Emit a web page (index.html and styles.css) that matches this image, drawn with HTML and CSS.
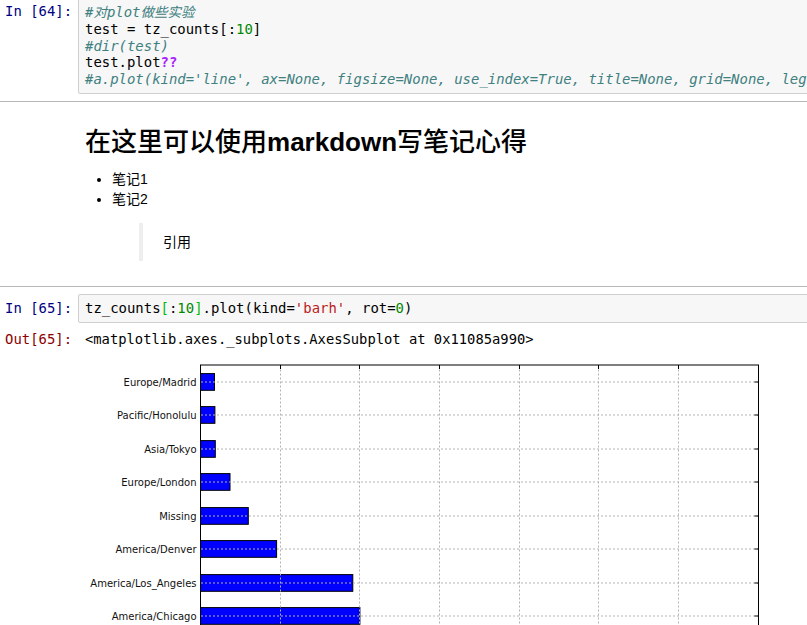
FILE: index.html
```html
<!DOCTYPE html>
<html>
<head>
<meta charset="utf-8">
<link rel="stylesheet" href="styles.css">
</head>
<body>
<div class="nb">
  <div class="cell code-cell">
    <div class="prompt in-prompt">In&nbsp;[64]:</div>
    <div class="input"><pre class="code"><span class="c">#<span class="cjk">对</span>plot<span class="cjk">做些实验</span></span>
test = tz_counts[:<span class="n">10</span>]
<span class="c">#dir(test)</span>
test.plot<span class="op">??</span>
<span class="c">#a.plot(kind='line', ax=None, figsize=None, use_index=True, title=None, grid=None, legend=True, style=None)</span></pre></div>
  </div>

  <div class="cell md-cell">
    <div class="rendered">
      <h1 class="md-title"><span class="cjkh">在这里可以使用</span>markdown<span class="cjkh">写笔记心得</span></h1>
      <ul class="md-list">
        <li>笔记1</li>
        <li>笔记2</li>
      </ul>
      <blockquote class="md-quote">引用</blockquote>
    </div>
  </div>

  <div class="cell code-cell second">
    <div class="prompt in-prompt">In&nbsp;[65]:</div>
    <div class="input"><pre class="code">tz_counts<span class="mb">[</span>:<span class="n">10</span><span class="mb">]</span>.plot(kind=<span class="s">'barh'</span>, rot=<span class="n">0</span>)</pre></div>
  </div>

  <div class="out-row">
    <div class="prompt out-prompt">Out[65]:</div>
    <div class="output">
      <pre class="out-text">&lt;matplotlib.axes._subplots.AxesSubplot at 0x11085a990&gt;</pre>
      <svg class="chart" width="722" height="360" viewBox="0 0 722 360" xmlns="http://www.w3.org/2000/svg">
        <g transform="translate(-85,-354.5)">
          <rect x="200.5" y="364.5" width="558" height="334.5" fill="#fff"/>
          <g fill="#0000ff" stroke="#000" stroke-width="1">
            <rect x="200.5" y="373.1" width="14" height="16.7"/>
            <rect x="200.5" y="406.1" width="14.4" height="16.7"/>
            <rect x="200.5" y="440.1" width="14.8" height="16.7"/>
            <rect x="200.5" y="473.1" width="29.5" height="16.7"/>
            <rect x="200.5" y="507.1" width="47.8" height="16.7"/>
            <rect x="200.5" y="540.1" width="76.1" height="16.7"/>
            <rect x="200.5" y="574.1" width="152.3" height="16.7"/>
            <rect x="200.5" y="607.1" width="159.4" height="16.7"/>
            <rect x="200.5" y="640.1" width="207.7" height="16.7"/>
            <rect x="200.5" y="674.1" width="498.6" height="16.7"/>
          </g>
          <g stroke="#b3b3b3" stroke-width="1" stroke-dasharray="2,2">
            <line x1="280.5" y1="365" x2="280.5" y2="699"/>
            <line x1="359.5" y1="365" x2="359.5" y2="699"/>
            <line x1="439.5" y1="365" x2="439.5" y2="699"/>
            <line x1="519.5" y1="365" x2="519.5" y2="699"/>
            <line x1="598.5" y1="365" x2="598.5" y2="699"/>
            <line x1="678.5" y1="365" x2="678.5" y2="699"/>
            <line x1="201" y1="381.5" x2="758" y2="381.5"/>
            <line x1="201" y1="414.5" x2="758" y2="414.5"/>
            <line x1="201" y1="448.5" x2="758" y2="448.5"/>
            <line x1="201" y1="481.5" x2="758" y2="481.5"/>
            <line x1="201" y1="515.5" x2="758" y2="515.5"/>
            <line x1="201" y1="548.5" x2="758" y2="548.5"/>
            <line x1="201" y1="582.5" x2="758" y2="582.5"/>
            <line x1="201" y1="615.5" x2="758" y2="615.5"/>
            <line x1="201" y1="648.5" x2="758" y2="648.5"/>
            <line x1="201" y1="682.5" x2="758" y2="682.5"/>
          </g>
          <g stroke="#000" stroke-width="1">
            <line x1="280.5" y1="364.5" x2="280.5" y2="368.5"/>
            <line x1="359.5" y1="364.5" x2="359.5" y2="368.5"/>
            <line x1="439.5" y1="364.5" x2="439.5" y2="368.5"/>
            <line x1="519.5" y1="364.5" x2="519.5" y2="368.5"/>
            <line x1="598.5" y1="364.5" x2="598.5" y2="368.5"/>
            <line x1="678.5" y1="364.5" x2="678.5" y2="368.5"/>
            <line x1="754.5" y1="381.5" x2="758.5" y2="381.5"/>
            <line x1="754.5" y1="414.5" x2="758.5" y2="414.5"/>
            <line x1="754.5" y1="448.5" x2="758.5" y2="448.5"/>
            <line x1="754.5" y1="481.5" x2="758.5" y2="481.5"/>
            <line x1="754.5" y1="515.5" x2="758.5" y2="515.5"/>
            <line x1="754.5" y1="548.5" x2="758.5" y2="548.5"/>
            <line x1="754.5" y1="582.5" x2="758.5" y2="582.5"/>
            <line x1="754.5" y1="615.5" x2="758.5" y2="615.5"/>
            <line x1="754.5" y1="648.5" x2="758.5" y2="648.5"/>
            <line x1="754.5" y1="682.5" x2="758.5" y2="682.5"/>
          </g>
          <rect x="200.5" y="364.5" width="558" height="334.5" fill="none" stroke="#000" stroke-width="1"/>
          <g class="tick-labels" text-anchor="end">
            <text x="196.5" y="385">Europe/Madrid</text>
            <text x="196.5" y="418">Pacific/Honolulu</text>
            <text x="196.5" y="452">Asia/Tokyo</text>
            <text x="196.5" y="485">Europe/London</text>
            <text x="196.5" y="519">Missing</text>
            <text x="196.5" y="552">America/Denver</text>
            <text x="196.5" y="586">America/Los_Angeles</text>
            <text x="196.5" y="619">America/Chicago</text>
            <text x="196.5" y="686">America/New_York</text>
          </g>
        </g>
      </svg>
    </div>
  </div>
</div>
</body>
</html>
```

FILE: styles.css
```css
* { box-sizing: border-box; }
html, body {
  margin: 0;
  padding: 0;
  background: #fff;
  overflow: hidden;
}
.nb {
  width: 840px;
  margin-top: -3px;
}
.cell {
  display: flex;
  align-items: flex-start;
}
.prompt {
  width: 72px;
  flex: 0 0 72px;
  text-align: right;
  font-family: "DejaVu Sans Mono", monospace;
  font-size: 13.9px;
  line-height: 16.8px;
  white-space: nowrap;
}
.in-prompt {
  color: #000080;
  padding-top: 6px;
}
.out-prompt {
  color: #8b0000;
}
.input {
  flex: 1;
  margin-left: 6px;
  background: #f7f7f7;
  border: 1px solid #cfcfcf;
  border-radius: 2px;
  overflow: hidden;
}
.code {
  margin: 0;
  padding: 5px 6px;
  font-family: "DejaVu Sans Mono", monospace;
  font-size: 13.95px;
  line-height: 16.8px;
  color: #000;
  white-space: pre;
}
.code .c { color: #408080; font-style: italic; }
.code .cjk { font-family: "Noto Sans CJK SC", sans-serif; font-size: 13.5px; }
.code .n { color: #008800; }
.code .s { color: #ba2121; }
.code .op { color: #aa22ff; font-weight: bold; }
.code .mb { color: #00bb00; }

.md-cell {
  margin-top: 7px;
  border-top: 1px solid #b8b8b8;
  border-bottom: 1px solid #b8b8b8;
}
.rendered {
  padding: 22px 0 25px 85px;
  font-family: "Liberation Sans", "Noto Sans CJK SC", sans-serif;
  font-size: 14px;
  color: #000;
}
.md-title {
  margin: 0;
  font-size: 26px;
  line-height: 31px;
  font-weight: bold;
  font-family: "Liberation Sans", "Noto Sans CJK SC", sans-serif;
}
.md-title .cjkh {
  font-family: "Noto Sans CJK SC", sans-serif;
  font-weight: 500;
}
.md-list {
  margin: 11px 0 0 0;
  padding-left: 27px;
  line-height: 20px;
}
.md-quote {
  margin: 14px 0 0 54px;
  padding: 10px 0 10px 20px;
  border-left: 4px solid #eeeeee;
  line-height: 18px;
}

.second {
  margin-top: 7px;
}
.out-row {
  display: flex;
  align-items: flex-start;
  margin-top: 8px;
}
.output {
  flex: 1;
  margin-left: 6px;
  padding-left: 7px;
  display: flex;
  flex-direction: column;
}
.out-text {
  margin: 0;
  font-family: "DejaVu Sans Mono", monospace;
  font-size: 13.8px;
  line-height: 16.8px;
  color: #000;
}
.chart {
  display: block;
  margin-top: 7px;
}
.tick-labels {
  font-family: "DejaVu Sans", sans-serif;
  font-size: 10px;
  fill: #111;
}
```
